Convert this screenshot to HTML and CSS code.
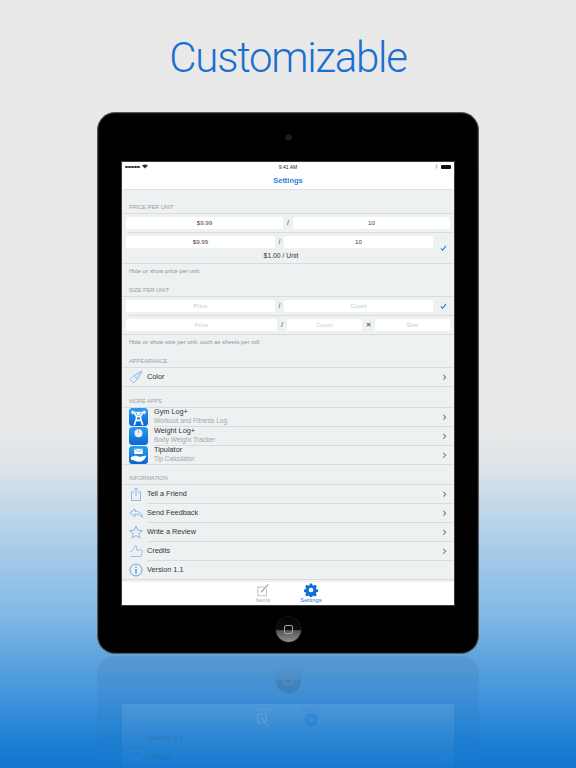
FILE: index.html
```html
<!DOCTYPE html>
<html lang="en">
<head>
<meta charset="utf-8">
<title>Customizable</title>
<link rel="stylesheet" href="styles.css">
</head>
<body>
<svg class="sprite" width="0" height="0" aria-hidden="true">
  <symbol id="chev" viewBox="0 0 6 8"><path d="M1.5 1 4.5 4 1.5 7" fill="none" stroke="#888" stroke-width="1.4"/></symbol>
  <symbol id="check" viewBox="0 0 8 7"><path d="M1 4 3 6 7 1" fill="none" stroke="#2a7ad8" stroke-width="1.2"/></symbol>
  <symbol id="gear" viewBox="0 0 24 24"><path fill="#0f6fd6" fill-rule="evenodd" d="M10 1h4l.6 3 2 .9 2.600-1.700 2.800 2.800-1.700 2.600.9 2 3 .6v4l-3 .6-.9 2 1.700 2.600-2.800 2.800-2.600-1.700-2 .9-.6 3h-4l-.6-3-2-.9-2.600 1.700-2.800-2.800 1.700-2.600-.9-2-3-.6v-4l3-.6.9-2-1.700-2.600 2.800-2.800 2.600 1.700 2-.9zM12 8a4 4 0 1 0 0 8 4 4 0 0 0 0-8z"/></symbol>
  <symbol id="pencil" viewBox="0 0 16 16"><path d="M12 6.500V14.500H2V4.500H10" fill="none" stroke="#c4c4c4" stroke-width="1.200"/><path d="M6 10.500 14 1.500" stroke="#b4b4b4" stroke-width="1.800"/></symbol>
  <symbol id="info" viewBox="0 0 14 14"><circle cx="7" cy="7" r="6" fill="none" stroke="#5b9fe4" stroke-width=".9"/><path d="M7 6v4.500M7 3.500v1.200" stroke="#3d8be0" stroke-width="1.300"/></symbol>
  <symbol id="thumb" viewBox="0 0 14 14"><path d="M1 7.500C3 7.500 5 5.500 6 1.500 8 1.500 8 4 7.500 6H12.500C13.500 6 13.500 7.500 13 8.500L12 12.500H1" fill="none" stroke="#8dbcee" stroke-width=".9"/></symbol>
</svg>

<main class="stage">
  <h1 class="title">Customizable</h1>

  <section class="ipad">
    <div class="bezel-top"><span class="camera"></span></div>

    <div class="screen">
      <div class="status">
        <span class="signal"><i></i><i></i><i></i><i></i><i></i>
          <svg class="wifi" viewBox="0 0 10 7" width="6" height="5"><path d="M5 7 0 2Q5-2 10 2Z" fill="#333"/></svg>
        </span>
        <span class="clock">9:41 AM</span>
        <span class="power">
          <svg class="bt" viewBox="0 0 4 7" width="3" height="5"><path d="M.5 2 3 5 2 6.500V.5L3 2 .5 5" fill="none" stroke="#999" stroke-width=".6"/></svg>
          <span class="battery"></span>
        </span>
      </div>
      <header class="nav">Settings</header>

      <div class="content">
        <div class="head head-first">Price Per Unit</div>
        <div class="group">
          <div class="row row-fields">
            <span class="field f-wide">$9.99</span><span class="sep sep-wide">/</span><span class="field f-wide">10</span>
          </div>
          <div class="row row-tall row-last">
            <div class="tall-main">
              <div class="fields-line">
                <span class="field f-mid">$9.99</span><span class="sep">/</span><span class="field f-mid">10</span>
              </div>
              <div class="result">$1.00 / Unit</div>
            </div>
            <svg class="check check-low"><use href="#check"/></svg>
          </div>
        </div>
        <p class="foot">Hide or show price per unit.</p>

        <div class="head head-mid">Size Per Unit</div>
        <div class="group">
          <div class="row row-fields">
            <span class="field f-mid hint">Price</span><span class="sep">/</span><span class="field f-mid hint">Count</span>
            <svg class="check"><use href="#check"/></svg>
          </div>
          <div class="row row-fields row-last">
            <span class="field f-price hint">Price</span><span class="sep sep-wide">/</span><span class="field f-count hint">Count</span><span class="times">×</span><span class="field f-size hint">Size</span>
          </div>
        </div>
        <p class="foot">Hide or show size per unit, such as sheets per roll.</p>

        <div class="head head-mid">Appearance</div>
        <div class="group">
          <div class="row row-link row-last">
            <svg class="lead" viewBox="0 0 14 14"><path d="M1 9.500 5 5.500 8.500 9 4.500 13 1 9.500ZM5 5.500 13 1 8.500 9" fill="none" stroke="#7db0ea" stroke-width=".9"/><path d="M6 8l4-4" stroke="#a8ccf0" stroke-width=".7"/></svg>
            <span class="label">Color</span>
            <svg class="chev"><use href="#chev"/></svg>
          </div>
        </div>

        <div class="head">More Apps</div>
        <div class="group">
          <div class="row row-app">
            <span class="app">
              <svg viewBox="0 0 20 20" width="19" height="19"><circle cx="10" cy="6" r="2" fill="#fff"/><path d="M2 4.500H18" stroke="#fff" stroke-width="1"/><path d="M3.500 2.500v4M16.500 2.500v4M5 3v3M15 3v3" stroke="#fff" stroke-width="1.100"/><path d="M5.500 5 8 9h4l2.500-4M8 9l-.5 3.500L5.500 18M12 9l.5 3.500 2 5.500M8 13h4" fill="none" stroke="#fff" stroke-width="1.700"/></svg>
            </span>
            <span class="app-text"><b>Gym Log+</b><small>Workout and Fitness Log</small></span>
            <svg class="chev"><use href="#chev"/></svg>
          </div>
          <div class="row row-app">
            <span class="app">
              <svg viewBox="0 0 20 20" width="19" height="19"><circle cx="10" cy="6.500" r="4.200" fill="#e6f1fb"/><path d="M10 3.500V6.500" stroke="#e66" stroke-width=".7"/></svg>
            </span>
            <span class="app-text"><b>Weight Log+</b><small>Body Weight Tracker</small></span>
            <svg class="chev"><use href="#chev"/></svg>
          </div>
          <div class="row row-app row-last">
            <span class="app">
              <svg viewBox="0 0 20 20" width="19" height="19"><path d="M5.500 3h9v5.500h-9z" fill="#fff"/><path d="M5.500 3 10 6l4.500-3" fill="none" stroke="#3d9be8" stroke-width=".7"/><path d="M2 11.500 7 10c2 1 4 1.500 6 1l5-1c0 3-3 6-6.500 6.500C8 17 5 14.500 2 14.500z" fill="#fff"/></svg>
            </span>
            <span class="app-text"><b>Tipulator</b><small>Tip Calculator</small></span>
            <svg class="chev"><use href="#chev"/></svg>
          </div>
        </div>

        <div class="head head-info">Information</div>
        <div class="group">
          <div class="row row-link">
            <svg class="lead" viewBox="0 0 14 14"><path d="M5 5H2.500V13.500H11.500V5H9M7 9V.8M4.800 3 7 .8 9.200 3" fill="none" stroke="#7db0ea" stroke-width=".9"/></svg>
            <span class="label">Tell a Friend</span>
            <svg class="chev"><use href="#chev"/></svg>
          </div>
          <div class="row row-link">
            <svg class="lead" viewBox="0 0 14 14"><path d="M6 3 .8 6.800 6 10.500V8.200C9 8 11.500 9 13.500 11.500 13 7.500 10 5.200 6 5.200Z" fill="none" stroke="#7db0ea" stroke-width=".9"/></svg>
            <span class="label">Send Feedback</span>
            <svg class="chev"><use href="#chev"/></svg>
          </div>
          <div class="row row-link">
            <svg class="lead" viewBox="0 0 14 14"><path d="M7 1 8.700 5.300 13.300 5.600 9.700 8.500 10.900 13 7 10.500 3.100 13 4.300 8.500.7 5.600 5.300 5.300Z" fill="none" stroke="#7db0ea" stroke-width=".9"/></svg>
            <span class="label">Write a Review</span>
            <svg class="chev"><use href="#chev"/></svg>
          </div>
          <div class="row row-link">
            <svg class="lead"><use href="#thumb"/></svg>
            <span class="label">Credits</span>
            <svg class="chev"><use href="#chev"/></svg>
          </div>
          <div class="row row-link row-last">
            <svg class="lead"><use href="#info"/></svg>
            <span class="label">Version 1.1</span>
          </div>
        </div>
      </div>

      <nav class="tabs">
        <span class="tab"><svg class="tab-icon"><use href="#pencil"/></svg><span>Items</span></span>
        <span class="tab tab-on"><svg class="tab-icon"><use href="#gear"/></svg><span>Settings</span></span>
      </nav>
    </div>

    <div class="bezel-bottom"><span class="home"><i></i></span></div>
  </section>

  <div class="reflection" aria-hidden="true">
    <div class="ref-home"><span class="home home-ref"><i></i></span></div>
    <div class="ref-screen">
      <div class="ref-tabs">
        <span class="tab"><svg class="tab-icon"><use href="#pencil"/></svg><span>Items</span></span>
        <span class="tab tab-on"><svg class="tab-icon"><use href="#gear"/></svg><span>Settings</span></span>
      </div>
      <div class="ref-row"><svg class="lead"><use href="#info"/></svg><span>Version 1.1</span></div>
      <div class="ref-row"><svg class="lead"><use href="#thumb"/></svg><span>Credits</span><svg class="chev"><use href="#chev"/></svg></div>
    </div>
  </div>
</main>
</body>
</html>
```

FILE: styles.css
```css
* { box-sizing: border-box; }
html, body { margin: 0; padding: 0; }
body {
  width: 576px;
  height: 768px;
  overflow: hidden;
  font-family: "Liberation Sans", Arial, sans-serif;
  background: linear-gradient(180deg, #e9e9e9 0px, #e8e8e8 430px, #dbe3e8 470px, #b8d4ea 520px, #9cc6e8 570px, #7fb7e6 620px, #5da3de 660px, #3f93dc 700px, #1f80d3 740px, #1277cf 768px);
}
.sprite { display: block; width: 0; height: 0; }
.stage { display: flex; flex-direction: column; align-items: center; height: 768px; overflow: hidden; }

.title {
  margin: 0;
  height: 112px;
  display: flex;
  align-items: center;
  padding-top: 2px;
  font-family: Roboto, "Liberation Sans", sans-serif;
  font-weight: 300;
  font-size: 42px;
  letter-spacing: -1.25px;
  color: #1a6fd0;
  flex: none;
}

.ipad {
  flex: none;
  width: 382px;
  height: 542px;
  display: flex;
  flex-direction: column;
  align-items: center;
  background: #000;
  border-radius: 18px;
  border: 1.5px solid #56565a;
  box-shadow: inset 0 0 0 .5px #222;
}
.bezel-top { height: 47.5px; width: 100%; display: flex; align-items: center; justify-content: center; padding-top: 2px; flex: none; }
.camera { width: 5px; height: 5px; border-radius: 50%; background: #1a1d24; box-shadow: 0 0 0 .5px #2a2a2a; }
.bezel-bottom { flex: 1; width: 100%; display: flex; align-items: center; justify-content: center; }

.home {
  display: flex;
  align-items: center;
  justify-content: center;
  width: 25px;
  height: 25px;
  border-radius: 50%;
  background: linear-gradient(180deg, #050505 0%, #0d0d0d 50%, #55585a 55%, #8a8d8f 100%);
  box-shadow: 0 0 0 .5px #2c2c2c;
}
.home i { display: block; width: 9px; height: 9px; border: 1px solid #a5a5a5; border-radius: 2px; }

.screen {
  flex: none;
  width: 334px;
  height: 445px;
  border: 1px solid #3c3c3c;
  display: flex;
  flex-direction: column;
  background: #fff;
}
.status {
  flex: none;
  height: 10.5px;
  padding: 0 3px;
  display: grid;
  grid-template-columns: 1fr auto 1fr;
  align-items: center;
  font-size: 5px;
  color: #222;
}
.signal { display: flex; align-items: center; gap: .5px; }
.signal i { display: block; width: 2.500px; height: 2.500px; border-radius: 50%; background: #333; }
.wifi { margin-left: 2px; }
.power { display: flex; align-items: center; justify-content: flex-end; gap: 3px; }
.battery { display: block; width: 10px; height: 4.500px; background: #111; border-radius: 1px; }

.nav {
  flex: none;
  height: 17.5px;
  display: flex;
  align-items: center;
  justify-content: center;
  font-size: 7.500px;
  font-weight: 700;
  color: #2a7fdd;
  border-bottom: 1px solid #dfe2e4;
}

.content { flex: 1; background: #eef1f2; display: flex; flex-direction: column; min-height: 0; }

.head {
  flex: none;
  height: 20px;
  padding: 0 0 2.500px 7px;
  display: flex;
  align-items: flex-end;
  font-size: 5.600px;
  text-transform: uppercase;
  color: #9ca0a3;
}
.head-first { height: 23px; }
.head-mid { height: 18px; }
.head-info { height: 19px; }

.group { flex: none; border-top: 1px solid #d9dcde; }
.row {
  position: relative;
  display: flex;
  align-items: center;
  height: 19px;
  padding: 0 0 1px 4px;
  flex: none;
}
.row::after {
  content: "";
  position: absolute;
  left: 7px;
  right: 0;
  bottom: 0;
  height: 1px;
  background: #d9dcde;
}
.row-link::after { left: 25px; }
.row-app::after { left: 32px; }
.row-last::after { left: 0; }
.row-fields { align-items: flex-start; padding-top: 3px; }
.row-tall { height: 31px; align-items: flex-start; padding-top: 3px; }
.tall-main { width: 307px; }
.fields-line { display: flex; }
.result { margin-top: 4px; text-align: center; font-size: 6.800px; color: #333; padding-left: 3px; }

.field {
  display: flex;
  align-items: center;
  justify-content: center;
  height: 12px;
  background: #fff;
  border-radius: 1.500px;
  font-size: 6.200px;
  color: #444;
  flex: none;
}
.hint { color: #c9cccf; }
.f-wide { width: 157px; }
.f-mid { width: 149px; }
.f-price { width: 151px; }
.f-count { width: 75px; }
.f-size { width: 75px; }
.sep { width: 9px; flex: none; text-align: center; font-size: 7px; line-height: 12px; color: #333; }
.sep-wide { width: 10px; }
.times { width: 13px; flex: none; text-align: center; font-size: 8px; font-weight: 700; line-height: 12px; color: #555; }

.check { width: 7px; height: 6px; flex: none; margin-left: 7px; margin-top: 3px; }
.check-low { margin-top: 9px; margin-left: 7px; }

.lead { width: 14px; height: 14px; flex: none; margin-left: 3px; }
.label { margin-left: 4px; font-size: 7.300px; color: #333; }
.chev { position: absolute; right: 7.500px; top: 6px; width: 5px; height: 6.500px; }

.row-app { padding-left: 7px; }
.app {
  display: block;
  width: 19px;
  height: 18px;
  overflow: hidden;
  border-radius: 3.500px;
  flex: none;
  background: linear-gradient(180deg, #2b9ef0 0%, #0b66d0 100%);
}
.app svg { display: block; }
.app-text { display: flex; flex-direction: column; margin-left: 6px; line-height: 8.500px; }
.app-text b { font-weight: 400; font-size: 7.300px; color: #333; }
.app-text small { font-size: 6.600px; color: #a3a6a9; }

.foot { flex: none; margin: 0; height: 14px; padding: 3px 0 0 7px; font-size: 5.900px; line-height: 8px; color: #8e9295; }

.tabs {
  flex: none;
  height: 23px;
  background: #fff;
  display: flex;
  justify-content: center;
  gap: 26px;
  padding-right: 2px;
}
.tab { width: 22px; display: flex; flex-direction: column; align-items: center; font-size: 6px; line-height: 6px; color: #b0b0b0; }
.tab-on { color: #2a7fdd; }
.tab-icon { width: 14px; height: 14px; margin-top: 1.500px; }

.reflection {
  flex: none;
  width: 382px;
  height: 113px;
  margin-top: 2px;
  display: flex;
  flex-direction: column;
  align-items: center;
  border-radius: 18px 18px 0 0;
  background: linear-gradient(180deg, rgba(40, 80, 120, .14) 0%, rgba(20, 80, 140, .08) 45%, rgba(20, 90, 160, .02) 100%);
}
.ref-home { flex: none; height: 48px; display: flex; align-items: center; justify-content: center; }
.home-ref { opacity: .1; transform: scaleY(-1); }
.ref-screen {
  flex: 1;
  width: 332px;
  background: linear-gradient(180deg, rgba(255, 255, 255, .1), rgba(255, 255, 255, .02));
}
.ref-tabs { display: flex; justify-content: center; gap: 26px; padding-right: 2px; transform: scaleY(-1); opacity: .3; height: 25px; }
.ref-row { position: relative; height: 19px; display: flex; align-items: center; gap: 4px; padding-left: 4px; font-size: 7.300px; color: #333; transform: scaleY(-1); opacity: .15; }
```
